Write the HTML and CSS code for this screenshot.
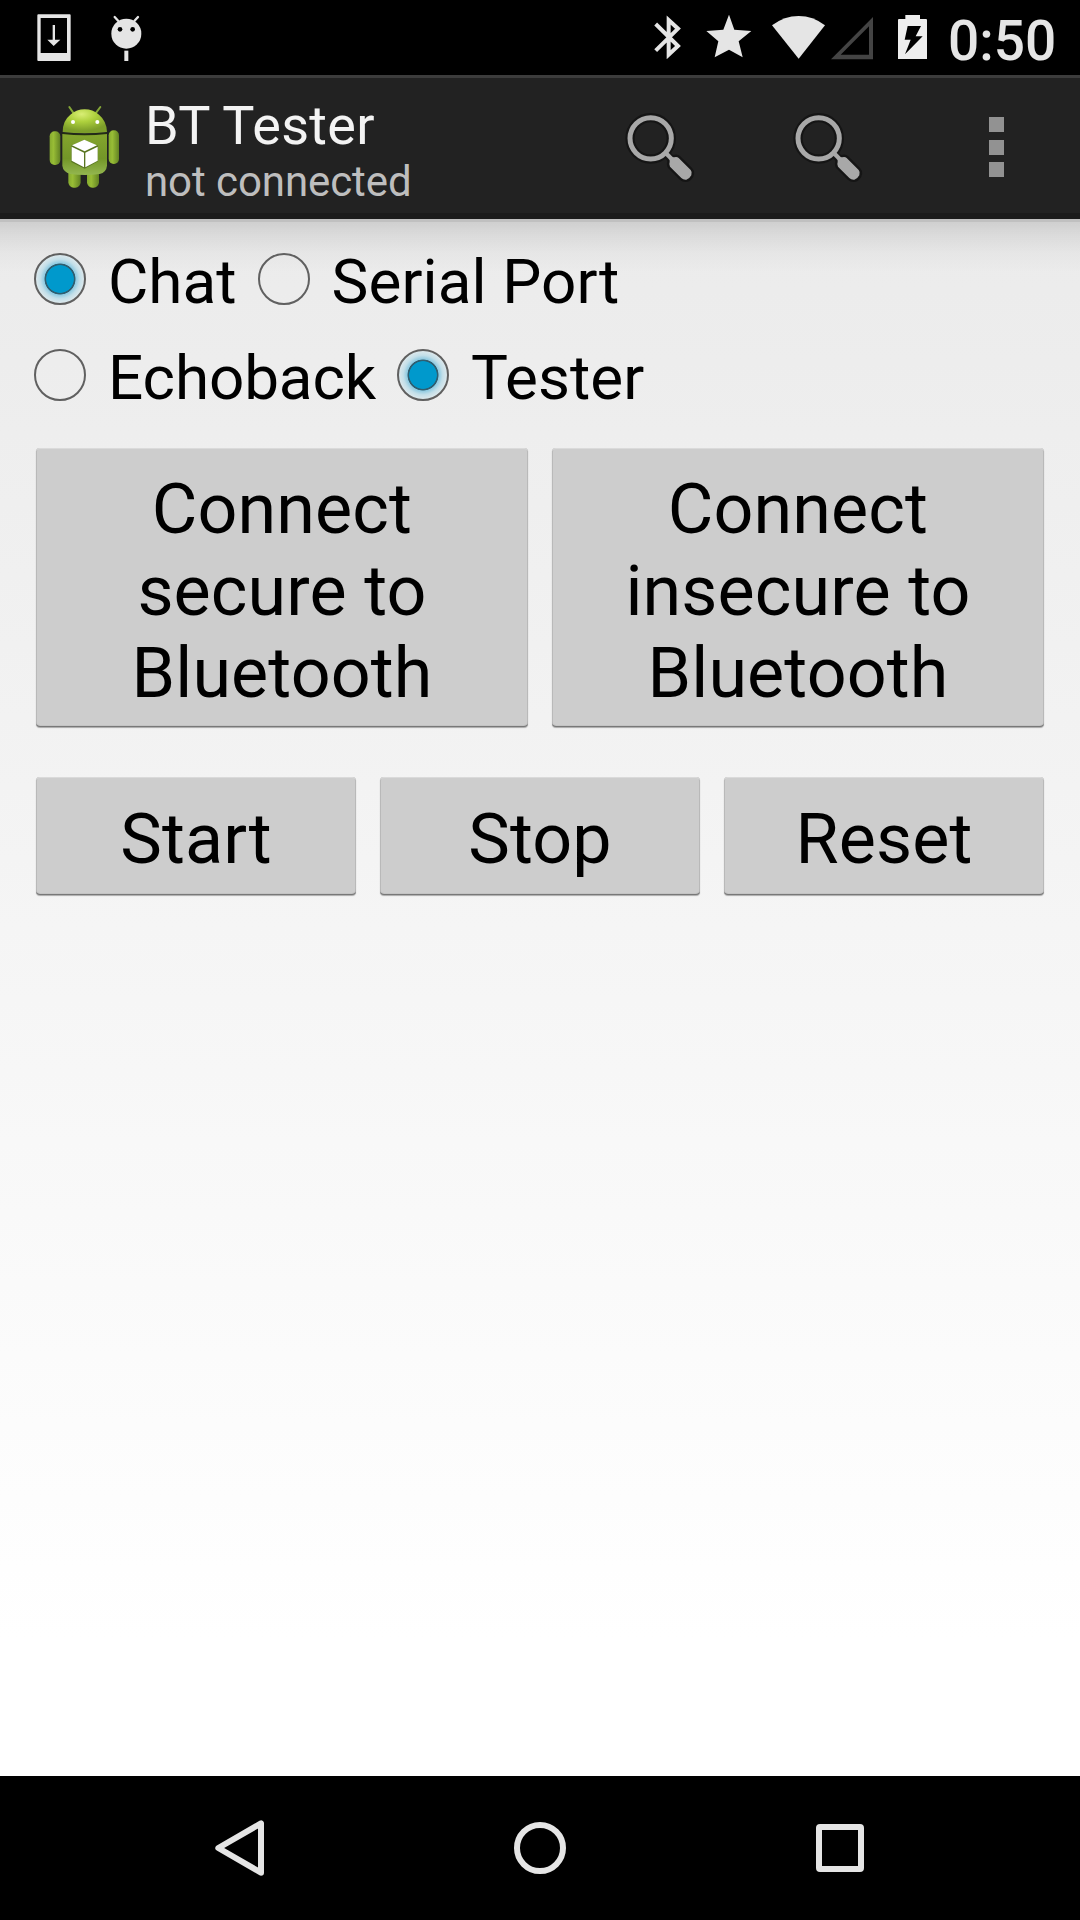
FILE: index.html
```html
<!DOCTYPE html>
<html lang="en">
<head>
<meta charset="utf-8">
<title>BT Tester</title>
<link rel="stylesheet" href="styles.css">
</head>
<body>
<div class="screen">
  <div class="status-bar">
    <svg class="st-download" viewBox="0 0 102 144"><path fill="#e5e5e5" fill-rule="evenodd" d="M4 1H98Q101 1 101 4V138Q101 141 98 141H4Q1 141 1 138V4Q1 1 4 1ZM11 12V117H90V12Z"/><path fill="#e5e5e5" d="M47 33H54V77H70L50 96L31 77H47Z"/></svg>
    <svg class="st-debug" viewBox="0 0 93 141"><g fill="#e5e5e5"><circle cx="46" cy="59" r="45"/><path d="M40 110H52V141H40Z"/></g><path d="M11 9L22 21M81 9L70 21" stroke="#e5e5e5" stroke-width="7" stroke-linecap="round"/><circle cx="27" cy="46" r="7"/><circle cx="65" cy="46" r="7"/></svg>
    <span class="spacer"></span>
    <svg class="st-bluetooth" viewBox="0 0 84 132"><path d="M5 27L72 93L44 119V15L72 41L5 107" fill="none" stroke="#e5e5e5" stroke-width="12"/></svg>
    <svg class="st-star" viewBox="0 0 138 132"><path fill="#e5e5e5" d="M69 -1L85 44L136 48L98 79L110 127L69 104L26 127L37 79L1 48L52 44Z"/></svg>
    <svg class="st-wifi" viewBox="0 0 162 132"><path fill="#e5e5e5" d="M0 31Q37 3 80 3T159 31L80 131Z"/></svg>
    <svg class="st-cell" viewBox="0 0 129 129"><path fill="#444" fill-rule="evenodd" d="M126 0V127H0ZM114 28L29 113H114Z"/></svg>
    <svg class="st-battery" viewBox="0 0 87 132"><path fill="#eee" fill-rule="evenodd" d="M22 0H66V12H84Q87 12 87 15V132H0V15Q0 12 3 12H22ZM29 33L20 74H38L21 118L74 64H53L69 33Z"/></svg>
    <span class="clock">0:50</span>
  </div>

  <header class="action-bar">
    <svg class="app-icon" viewBox="0 0 219 258">
      <defs>
        <linearGradient id="limb"><stop offset="0" stop-color="#85aa2e"/><stop offset=".35" stop-color="#98bd36"/><stop offset="1" stop-color="#628223"/></linearGradient>
        <linearGradient id="torso" x2="0" y2="1"><stop offset="0" stop-color="#84a52d"/><stop offset=".6" stop-color="#739628"/><stop offset="1" stop-color="#94b750"/></linearGradient>
        <radialGradient id="head" cx=".43" cy=".2" r=".7"><stop offset="0" stop-color="#d9ee75"/><stop offset=".45" stop-color="#aed13d"/><stop offset="1" stop-color="#7d9e2a"/></radialGradient>
      </defs>
      <path d="M64 9L75 25M157 9L145 25" stroke="#84a637" stroke-width="6" stroke-linecap="round"/>
      <g fill="url(#limb)">
        <rect x="5" y="82" width="32" height="101" rx="15"/>
        <rect x="182" y="79" width="31" height="101" rx="15"/>
        <rect x="61" y="190" width="37" height="61" rx="16"/>
        <rect x="117" y="190" width="36" height="61" rx="16"/>
      </g>
      <path fill="url(#torso)" d="M43 90H177V185Q175 205 155 210Q110 216 67 210Q45 203 43 185Z"/>
      <path fill="url(#head)" d="M44 84Q44 50 67 32Q86 16 110 16T153 32Q176 51 177 84Q110 92 44 84Z"/>
      <path d="M43 88Q110 96 177 88" fill="none" stroke="#242e13" stroke-width="4"/>
      <circle cx="75" cy="54" r="6" fill="#fff"/><circle cx="148" cy="54" r="6" fill="#fff"/>
      <path fill="#597521" d="M70 125L109 107L150 125V172L110 194L70 174Z"/>
      <path fill="#fff" d="M72 124L109 107L147 124L110 142ZM71 128L108 146V190L71 170ZM112 146L149 128V170L112 190Z"/>
    </svg>
    <div class="titles">
      <h1 class="title">BT Tester</h1>
      <p class="subtitle">not connected</p>
    </div>
    <span class="spacer"></span>
    <div class="action">
      <svg class="search-icon" viewBox="0 0 216 216"><use href="#lens"/>
        <defs><g id="lens">
          <g fill="none" stroke="#151515"><circle cx="77" cy="79" r="62" stroke-width="28"/><path stroke-width="24" d="M121 123L140 142"/></g>
          <path fill="#151515" stroke="#151515" stroke-width="14" stroke-linejoin="round" d="M134 141Q136 135 147 136Q156 133 161 138L197 174Q203 181 199 190Q194 200 184 203Q175 204 169 198L135 164Q131 158 134 150Z"/>
          <g fill="none" stroke="#a8a8a8"><circle cx="77" cy="79" r="62" stroke-width="15"/><path stroke-width="13" d="M120 121L143 144"/></g>
          <path fill="#a8a8a8" d="M134 141Q136 135 147 136Q156 133 161 138L197 174Q203 181 199 190Q194 200 184 203Q175 204 169 198L135 164Q131 158 134 150Z"/>
        </g></defs>
      </svg>
    </div>
    <div class="action"><svg class="search-icon" viewBox="0 0 216 216"><use href="#lens"/></svg></div>
    <div class="action overflow"><i class="dot"></i><i class="dot"></i><i class="dot"></i></div>
  </header>

  <main class="content">
    <div class="radio-row service">
      <label class="radio"><span class="ring checked"></span>Chat</label>
      <label class="radio"><span class="ring"></span>Serial Port</label>
    </div>
    <div class="radio-row mode">
      <label class="radio"><span class="ring"></span>Echoback</label>
      <label class="radio"><span class="ring checked"></span>Tester</label>
    </div>
    <div class="button-row connect">
      <button class="btn">Connect<br>secure to<br>Bluetooth</button>
      <button class="btn">Connect<br>insecure to<br>Bluetooth</button>
    </div>
    <div class="button-row control">
      <button class="btn">Start</button>
      <button class="btn">Stop</button>
      <button class="btn">Reset</button>
    </div>
  </main>

  <nav class="nav-bar">
    <svg class="nav-icon" viewBox="0 0 72 72"><path d="M14.3 36L57 11.3V60.7Z"/></svg>
    <svg class="nav-icon" viewBox="0 0 72 72"><circle cx="36" cy="36" r="23"/></svg>
    <svg class="nav-icon" viewBox="0 0 72 72"><rect x="15" y="15" width="42" height="42" rx="1"/></svg>
  </nav>
</div>
</body>
</html>
```
FILE: styles.css
```css
* { box-sizing: border-box; }

body {
  margin: 0;
  background: #000;
  font-family: Roboto, "Noto Sans", sans-serif;
}

.screen {
  display: flex;
  flex-direction: column;
  width: 1080px;
  height: 1920px;
  overflow: hidden;
}

.spacer { flex: 1; }

/* Status bar */
.status-bar {
  display: flex;
  align-items: flex-start;
  height: 75px;
  padding: 14px 24px 0 37px;
  background: #000;
}

.status-bar svg { flex: none; }
.st-download { width: 34px; height: 48px; }
.st-debug { width: 31px; height: 47px; margin: 0 0 0 39.5px; }
.st-bluetooth { width: 28px; height: 44px; margin: 1px 0 0; }
.st-star { width: 46px; height: 44px; margin: 1px 0 0 24.5px; }
.st-wifi { width: 54px; height: 44px; margin: 1px 0 0 20px; }
.st-cell { width: 43px; height: 43px; margin: 3px 0 0 5px; }
.st-battery { width: 29px; height: 44px; margin: 1px 21px 0 24px; }

.clock {
  width: 108px;
  margin-top: -4px;
  color: #e5e5e5;
  font-size: 55px;
  font-weight: 500;
  line-height: 62px;
  white-space: nowrap;
}

/* Action bar */
.action-bar {
  display: flex;
  flex: none;
  height: 144px;
  padding-left: 48px;
  background: #222;
  border-top: 3px solid #3c3c3c;
  border-bottom: 6px solid #1b1b1b;
}

.app-icon {
  flex: none;
  width: 73px;
  height: 86px;
  margin-top: 26px;
}

.titles { margin: 16px 0 0 24px; }

.title,
.subtitle {
  margin: 0;
  font-weight: 400;
  white-space: nowrap;
}

.title {
  color: #f3f3f3;
  font-size: 54px;
  letter-spacing: .3px;
  line-height: 63px;
}

.subtitle {
  color: #bebebe;
  font-size: 42px;
  letter-spacing: -.08px;
  line-height: 49px;
}

.action {
  display: flex;
  flex: none;
  justify-content: center;
  width: 168px;
  padding-top: 34px;
}

.search-icon { width: 72px; height: 72px; }

.overflow {
  flex-direction: column;
  justify-content: flex-start;
  align-items: center;
  gap: 7.5px;
  width: 167px;
  padding-top: 39px;
}

.dot {
  width: 15px;
  height: 15px;
  background: #929292;
}

/* Main content */
.content {
  flex: 1;
  padding: 12px 36px 0 12px;
  background:
    linear-gradient(#c0c0c0 3px, transparent 3px) no-repeat 0 0 / 100% 4px,
    linear-gradient(rgba(0, 0, 0, .13), rgba(0, 0, 0, .07) 16px, rgba(0, 0, 0, .025) 34px, transparent 54px),
    linear-gradient(#ebebeb, #fff 1420px);
}

.radio-row {
  display: flex;
  height: 96px;
}

.service .radio:first-child { margin-right: -1px; }
.service .radio:last-child { letter-spacing: .1px; }
.mode .radio:first-child { margin-right: -1px; letter-spacing: -.12px; }

.radio {
  display: flex;
  color: #000;
  font-size: 62px;
  line-height: 102px;
  white-space: nowrap;
}

.ring {
  flex: none;
  width: 52px;
  height: 52px;
  margin: 22px;
  border: 2px solid #606060;
  border-radius: 50%;
}

.ring.checked {
  background: radial-gradient(circle closest-side, #09c 0 56%, #2f5e70 59% 63%, #8fcae1 66%, #c3dfe9 82%, #dce8ec 100%);
}

.button-row {
  display: flex;
  gap: 24px;
  padding-left: 24px;
}

.btn {
  flex: 1 1 0;
  padding: 5px 0 0;
  border: 0;
  border-radius: 4px;
  background: #cdcdcd;
  box-shadow:
    inset 0 2px 0 -1px #dadada,
    inset 0 -2px 1px -1px #6f6f6f,
    inset 1px 0 0 #b9b9b9,
    inset -1px 0 0 #b9b9b9,
    0 1px 1px rgba(0, 0, 0, .3);
  color: #000;
  font-family: inherit;
  font-size: 70px;
  letter-spacing: .12px;
  line-height: 82px;
}

.connect {
  height: 279px;
  margin-top: 25px;
}

.connect .btn { padding-top: 7px; }

.control {
  height: 118px;
  margin-top: 50px;
}

/* Navigation bar */
.nav-bar {
  display: flex;
  flex: none;
  justify-content: center;
  align-items: center;
  gap: 228px;
  height: 144px;
  background: #000;
}

.nav-icon {
  width: 72px;
  height: 72px;
  fill: none;
  stroke: #e5e5e5;
  stroke-width: 6;
  stroke-linejoin: round;
}
```
